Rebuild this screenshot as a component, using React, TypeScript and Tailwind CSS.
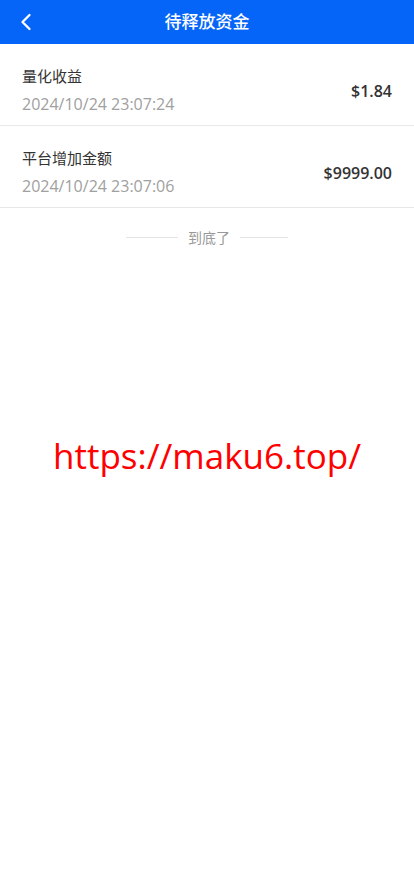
import { ChevronLeft } from "lucide-react";

const records = [
  { title: "量化收益", time: "2024/10/24 23:07:24", amount: "$1.84" },
  { title: "平台增加金额", time: "2024/10/24 23:07:06", amount: "$9999.00" },
];

export default function App() {
  return (
    <div
      className="min-h-[896px] w-[414px] bg-white"
      style={{ fontFamily: '"Open Sans", "Noto Sans CJK SC", sans-serif' }}
    >
      {/* header */}
      <div className="relative flex h-[44px] items-center justify-center bg-[#0565f9]">
        <ChevronLeft className="absolute left-[12px] top-[8px] h-[28px] w-[28px] text-white" strokeWidth={2} />
        <h1 className="text-[17px] font-medium text-white">待释放资金</h1>
      </div>

      {/* list */}
      <div>
        {records.map((r) => (
          <div key={r.time} className="flex items-center justify-between border-b border-[#e8e8e8] px-[22px] pt-[21px] pb-[10px]">
            <div className="flex flex-col">
              <span className="text-[15px] leading-[22px] text-[#333]">{r.title}</span>
              <span className="mt-[6px] text-[16px] leading-[22px] text-[#a0a0a0]">{r.time}</span>
            </div>
            <span className="mt-[2px] text-[16px] font-semibold text-[#333]">{r.amount}</span>
          </div>
        ))}
      </div>

      {/* end */}
      <div className="mt-[19px] flex items-center justify-center gap-[10px]">
        <div className="h-px w-[52px] bg-[#e5e5e5]" />
        <span className="text-[14px] text-[#999]">到底了</span>
        <div className="h-px w-[48px] bg-[#e5e5e5]" />
      </div>

      {/* watermark */}
      <div className="mt-[182px] flex justify-center">
        <span className="text-[35px] text-[#ff0000]">https://maku6.top/</span>
      </div>
    </div>
  );
}
